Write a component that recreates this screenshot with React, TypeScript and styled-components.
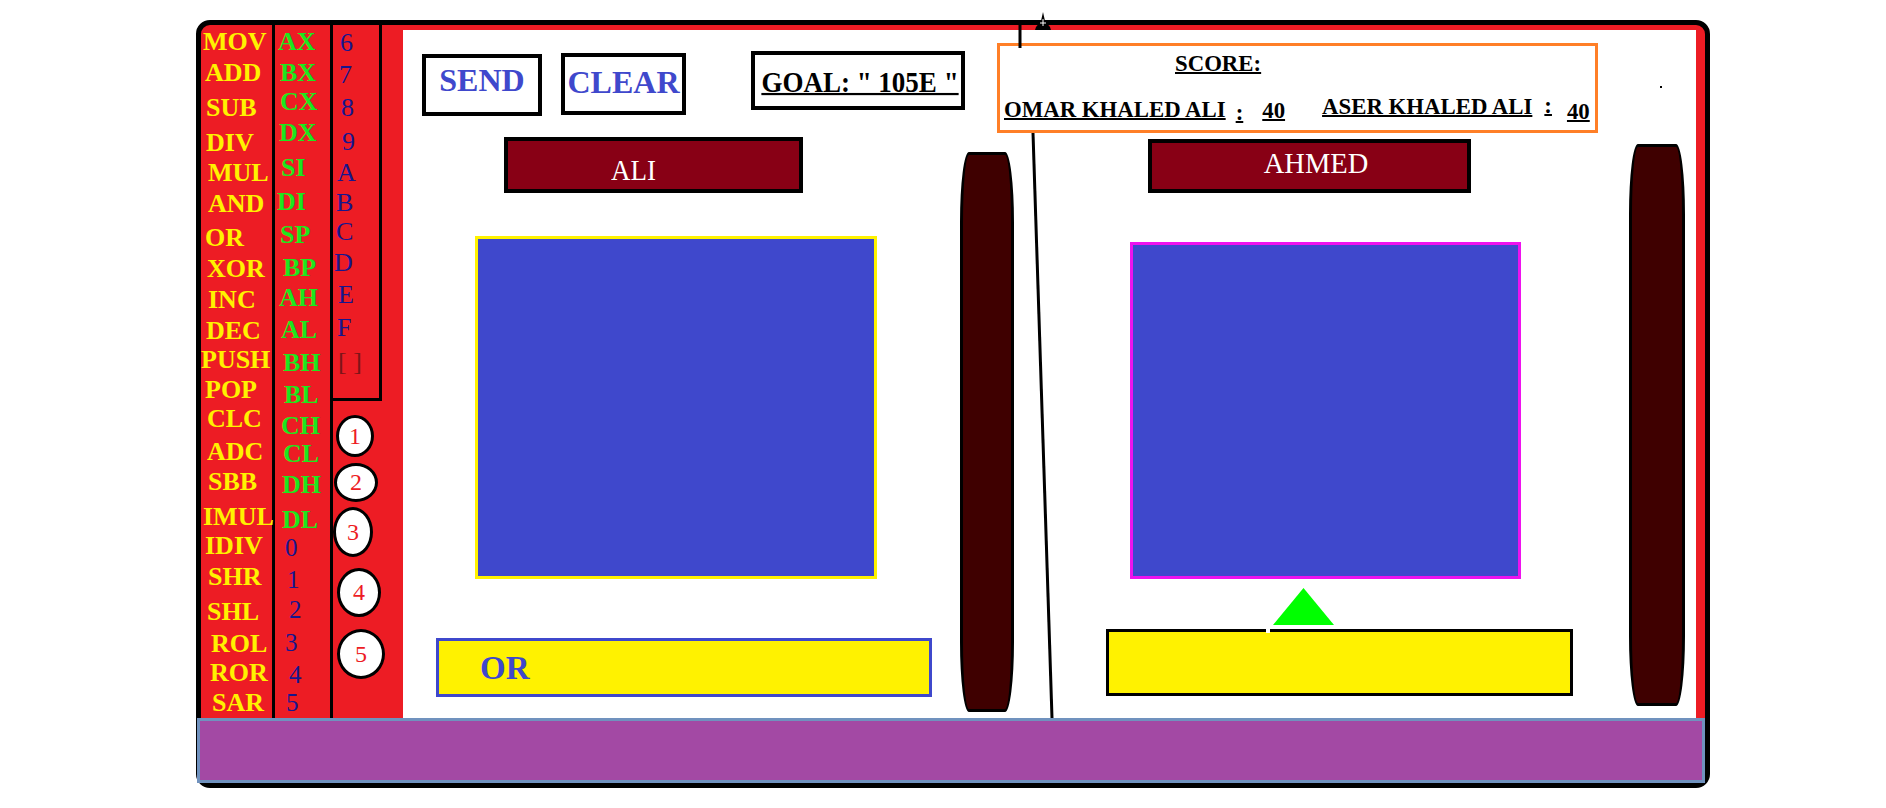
import React from "react";
import styled, { createGlobalStyle } from "styled-components";

const RED = "#ed1c24";
const YELLOW = "#fff200";
const GREEN = "#1ee61e";
const NAVY = "#16168e";
const BLUE = "#3f48cc";
const MAROON = "#880015";
const PILL = "#3f0000";

const GlobalStyle = createGlobalStyle`
  html, body {
    margin: 0;
    padding: 0;
    background: #ffffff;
  }
  body {
    font-family: "Liberation Serif", "Times New Roman", serif;
  }
`;

// [text, centre y on the page, left offset inside the column]
type Item = [string, number, number];

const MNEMONICS: Item[] = [
  ["MOV", 42, 2], ["ADD", 73, 4], ["SUB", 108, 5], ["DIV", 143, 5],
  ["MUL", 173, 7], ["AND", 204, 7], ["OR", 238, 4], ["XOR", 269, 6],
  ["INC", 300, 7], ["DEC", 331, 5], ["PUSH", 360, 0], ["POP", 390, 4],
  ["CLC", 419, 6], ["ADC", 452, 6], ["SBB", 482, 7], ["IMUL", 517, 2],
  ["IDIV", 546, 4], ["SHR", 577, 7], ["SHL", 612, 6], ["ROL", 644, 10],
  ["ROR", 673, 9], ["SAR", 703, 11],
];

const REGISTERS: Item[] = [
  ["AX", 42, 3], ["BX", 73, 5], ["CX", 102, 5], ["DX", 133, 4],
  ["SI", 168, 6], ["DI", 202, 2], ["SP", 235, 5], ["BP", 268, 8],
  ["AH", 298, 4], ["AL", 330, 6], ["BH", 363, 8], ["BL", 395, 9],
  ["CH", 426, 6], ["CL", 454, 8], ["DH", 485, 7], ["DL", 520, 7],
  ["0", 548, 10], ["1", 580, 12], ["2", 610, 14], ["3", 643, 10],
  ["4", 675, 14], ["5", 703, 11],
];

const HEX: Item[] = [
  ["6", 43, 7], ["7", 75, 6], ["8", 108, 8], ["9", 142, 9],
  ["A", 173, 4], ["B", 203, 3], ["C", 232, 3], ["D", 263, 1],
  ["E", 295, 5], ["F", 328, 4], ["[ ]", 362, 5],
];

// label, top, left, width, height
const BUBBLES: [string, number, number, number, number][] = [
  ["1", 415, 3, 38, 42],
  ["2", 463, 1, 44, 39],
  ["3", 507, 0, 40, 50],
  ["4", 568, 4, 44, 49],
  ["5", 629, 4, 48, 50],
];

const COLUMN_TOP = 25;
const LINE = 22;

const gapsFor = (items: Item[]) =>
  items.map((it, i) =>
    i === 0 ? it[1] - LINE / 2 - COLUMN_TOP : it[1] - items[i - 1][1] - LINE
  );

const tones = {
  op: { color: YELLOW, weight: 700, size: 26 },
  reg: { color: GREEN, weight: 700, size: 26 },
  num: { color: NAVY, weight: 400, size: 25 },
  hex: { color: NAVY, weight: 400, size: 26 },
  bracket: { color: "#7d1418", weight: 400, size: 26 },
};
type Tone = keyof typeof tones;

const App = () => {
  const opGaps = gapsFor(MNEMONICS);
  const regGaps = gapsFor(REGISTERS);
  const hexGaps = gapsFor(HEX);

  return (
    <>
      <GlobalStyle />
      <Page>
        <Frame>
          <ContentRow>
            <Sidebar>
              <OpColumn>
                {MNEMONICS.map(([t, , x], i) => (
                  <SideLabel key={t} $tone="op" $gap={opGaps[i]} $x={x}>
                    {t}
                  </SideLabel>
                ))}
              </OpColumn>
              <RegColumn>
                {REGISTERS.map(([t, , x], i) => (
                  <SideLabel
                    key={t}
                    $tone={/\d/.test(t) ? "num" : "reg"}
                    $gap={regGaps[i]}
                    $x={x}
                  >
                    {t}
                  </SideLabel>
                ))}
              </RegColumn>
              <HexColumn>
                <HexBox>
                  {HEX.map(([t, , x], i) => (
                    <SideLabel
                      key={t}
                      $tone={t === "[ ]" ? "bracket" : "hex"}
                      $gap={hexGaps[i]}
                      $x={x}
                    >
                      {t}
                    </SideLabel>
                  ))}
                </HexBox>
                {BUBBLES.map(([t, top, x, w, h], i) => {
                  const prev = i === 0 ? 401 : BUBBLES[i - 1][1] + BUBBLES[i - 1][4];
                  return (
                    <Bubble key={t} $gap={top - prev} $x={x} $w={w} $h={h}>
                      {t}
                    </Bubble>
                  );
                })}
              </HexColumn>
            </Sidebar>

            <Main>
              <TopBar>
                <ActionButton $w={120} $mt={24} $ml={19} $lift={9}>
                  SEND
                </ActionButton>
                <ActionButton $w={125} $mt={23} $ml={19} $lift={3}>
                  CLEAR
                </ActionButton>
                <GoalBox>
                  <Stretched $scale={1.1}>GOAL: " 105E "</Stretched>
                </GoalBox>
                <ScoreBox>
                  <ScoreTitle>SCORE:</ScoreTitle>
                  <ScoreRow>
                    <ScoreText $dx={4} $dy={23}>OMAR KHALED ALI</ScoreText>
                    <ScoreText $dx={10} $dy={26}>:</ScoreText>
                    <ScoreText $dx={19} $dy={24}>40</ScoreText>
                    <ScoreText $dx={37} $dy={20}>ASER KHALED ALI</ScoreText>
                    <ScoreText $dx={12} $dy={19}>:</ScoreText>
                    <ScoreText $dx={15} $dy={25}>40</ScoreText>
                  </ScoreRow>
                </ScoreBox>
              </TopBar>

              <Arena>
                <PlayerSide $ml={33} $w={496}>
                  <NameBar $w={299} $h={56} $mt={4} $ml={68} $size={27} $pad="10px 40px 0 0">
                    <Stretched $scale={1.1}>ALI</Stretched>
                  </NameBar>
                  <Screen $w={402} $h={343} $mt={43} $ml={39} $edge={YELLOW} />
                  <CommandBar $w={496} $h={59} $mt={59} $edge={BLUE}>
                    OR
                  </CommandBar>
                </PlayerSide>
                <Pill $w={54} $h={560} $mt={19} $ml={28} />
                <PlayerSide $ml={92} $w={467}>
                  <NameBar $w={323} $h={54} $mt={6} $ml={42} $size={28.5} $pad="0 0 4px 13px">
                    <Stretched $scale={1}>AHMED</Stretched>
                  </NameBar>
                  <Screen $w={391} $h={337} $mt={49} $ml={24} $edge="#ee12ee" />
                  <Arrow viewBox="0 0 61 37">
                    <polygon points="0,37 30.5,0 61,37" fill="#00ff00" />
                  </Arrow>
                  <CommandBar $w={467} $h={67} $mt={4} $edge="#000000" />
                </PlayerSide>
                <Pill $w={56} $h={562} $mt={11} $ml={56} />
              </Arena>

              <Overlay>
                <line x1={617} y1={-5} x2={617} y2={18} stroke="#000" strokeWidth={3} />
                <line x1={630} y1={103} x2={649} y2={688} stroke="#000" strokeWidth={3} />
                <polygon
                  points="640,-18 642,-9 647,-3 648,0 632,0 633,-3 638,-9"
                  fill="#000"
                />
                <line x1={640} y1={-11} x2={640} y2={-4} stroke="#fff" strokeWidth={1} />
                <line x1={637} y1={-7} x2={643} y2={-7} stroke="#fff" strokeWidth={1} />
                <rect x={1257} y={56} width={2} height={2} fill="#000" />
                <rect x={863} y={599} width={4} height={4} fill="#fff" />
              </Overlay>
            </Main>
          </ContentRow>
          <StatusBar />
        </Frame>
      </Page>
    </>
  );
};

const Page = styled.div`
  width: 1886px;
  height: 808px;
  box-sizing: border-box;
  padding: 20px 0 0 196px;
  overflow: hidden;
`;

const Frame = styled.div`
  width: 1514px;
  height: 768px;
  box-sizing: border-box;
  border: 5px solid #000;
  border-radius: 14px;
  background: ${RED};
  display: grid;
  grid-template-rows: 693px 65px;
`;

const ContentRow = styled.div`
  display: grid;
  grid-template-columns: 202px 1293px;
  padding-right: 9px;
`;

const Sidebar = styled.aside`
  display: grid;
  grid-template-columns: 74px 58px 70px;
  height: 693px;
`;

const OpColumn = styled.div`
  display: flex;
  flex-direction: column;
  border-right: 3px solid #000;
`;

const RegColumn = styled.div`
  display: flex;
  flex-direction: column;
  border-right: 3px solid #000;
`;

const HexColumn = styled.div`
  display: flex;
  flex-direction: column;
`;

const HexBox = styled.div`
  width: 49px;
  height: 376px;
  box-sizing: border-box;
  border-right: 3px solid #000;
  border-bottom: 3px solid #000;
  display: flex;
  flex-direction: column;
`;

const SideLabel = styled.div<{ $tone: Tone; $gap: number; $x: number }>`
  margin-top: ${(p) => p.$gap}px;
  padding-left: ${(p) => p.$x}px;
  height: ${LINE}px;
  line-height: ${LINE}px;
  font-size: ${(p) => tones[p.$tone].size}px;
  font-weight: ${(p) => tones[p.$tone].weight};
  color: ${(p) => tones[p.$tone].color};
  white-space: nowrap;
  flex-shrink: 0;
`;

const Bubble = styled.div<{ $gap: number; $x: number; $w: number; $h: number }>`
  margin-top: ${(p) => p.$gap}px;
  margin-left: ${(p) => p.$x}px;
  width: ${(p) => p.$w}px;
  height: ${(p) => p.$h}px;
  flex-shrink: 0;
  box-sizing: border-box;
  border: 3px solid #000;
  border-radius: 50%;
  background: #fff;
  color: ${RED};
  font-size: 24px;
  display: flex;
  align-items: center;
  justify-content: center;
`;

const Main = styled.main`
  position: relative;
  margin-top: 5px;
  height: 688px;
  background: #fff;
  display: flex;
  flex-direction: column;
`;

const TopBar = styled.div`
  display: flex;
  align-items: flex-start;
  height: 103px;
  flex-shrink: 0;
`;

const Stretched = styled.span<{ $scale: number }>`
  display: inline-block;
  transform: scaleY(${(p) => p.$scale});
  white-space: nowrap;
`;

const ActionButton = styled.div<{ $w: number; $mt: number; $ml: number; $lift: number }>`
  width: ${(p) => p.$w}px;
  height: 62px;
  margin: ${(p) => p.$mt}px 0 0 ${(p) => p.$ml}px;
  flex-shrink: 0;
  box-sizing: border-box;
  border: 4px solid #000;
  padding-bottom: ${(p) => p.$lift}px;
  display: flex;
  align-items: center;
  justify-content: center;
  color: ${BLUE};
  font-size: 32px;
  font-weight: 700;
`;

const GoalBox = styled.div`
  width: 214px;
  height: 59px;
  margin: 21px 0 0 65px;
  flex-shrink: 0;
  box-sizing: border-box;
  border: 4px solid #000;
  display: flex;
  align-items: center;
  justify-content: center;
  padding: 3px 0 0 4px;
  font-size: 27px;
  font-weight: 700;
  color: #000;
  text-decoration: underline;
  text-decoration-thickness: 2px;
`;

const ScoreBox = styled.div`
  width: 601px;
  height: 90px;
  margin: 13px 0 0 32px;
  flex-shrink: 0;
  box-sizing: border-box;
  border: 3px solid #ff7f27;
  display: flex;
  flex-direction: column;
`;

const ScoreTitle = styled.div`
  margin: 7px 0 0 175px;
  height: 22.8px;
  line-height: 22.8px;
  font-size: 22.8px;
  font-weight: 700;
  text-decoration: underline;
  text-decoration-thickness: 2px;
  align-self: flex-start;
`;

const ScoreRow = styled.div`
  display: flex;
  align-items: flex-start;
  height: 0;
`;

const ScoreText = styled.span<{ $dx: number; $dy: number }>`
  display: inline-block;
  flex-shrink: 0;
  margin: ${(p) => p.$dy}px 0 0 ${(p) => p.$dx}px;
  height: 22.8px;
  line-height: 22.8px;
  font-size: 22.8px;
  font-weight: 700;
  white-space: nowrap;
  text-decoration: underline;
  text-decoration-thickness: 2px;
`;

const Arena = styled.div`
  display: flex;
  align-items: flex-start;
`;

const PlayerSide = styled.section<{ $ml: number; $w: number }>`
  margin-left: ${(p) => p.$ml}px;
  width: ${(p) => p.$w}px;
  flex-shrink: 0;
  display: flex;
  flex-direction: column;
  align-items: flex-start;
`;

const NameBar = styled.div<{
  $w: number;
  $h: number;
  $mt: number;
  $ml: number;
  $size: number;
  $pad: string;
}>`
  width: ${(p) => p.$w}px;
  height: ${(p) => p.$h}px;
  margin: ${(p) => p.$mt}px 0 0 ${(p) => p.$ml}px;
  flex-shrink: 0;
  box-sizing: border-box;
  border: 4px solid #000;
  padding: ${(p) => p.$pad};
  background: ${MAROON};
  color: #fff;
  font-size: ${(p) => p.$size}px;
  display: flex;
  align-items: center;
  justify-content: center;
`;

const Screen = styled.div<{ $w: number; $h: number; $mt: number; $ml: number; $edge: string }>`
  width: ${(p) => p.$w}px;
  height: ${(p) => p.$h}px;
  margin: ${(p) => p.$mt}px 0 0 ${(p) => p.$ml}px;
  flex-shrink: 0;
  box-sizing: border-box;
  border: 3px solid ${(p) => p.$edge};
  background: ${BLUE};
`;

const CommandBar = styled.div<{ $w: number; $h: number; $mt: number; $edge: string }>`
  width: ${(p) => p.$w}px;
  height: ${(p) => p.$h}px;
  margin-top: ${(p) => p.$mt}px;
  flex-shrink: 0;
  box-sizing: border-box;
  border: 3px solid ${(p) => p.$edge};
  background: ${YELLOW};
  display: flex;
  align-items: center;
  padding: 2px 0 0 41px;
  color: ${BLUE};
  font-size: 33px;
  font-weight: 700;
`;

const Arrow = styled.svg`
  width: 61px;
  height: 37px;
  margin: 9px 0 0 167px;
  display: block;
  flex-shrink: 0;
`;

const Pill = styled.div<{ $w: number; $h: number; $mt: number; $ml: number }>`
  width: ${(p) => p.$w}px;
  height: ${(p) => p.$h}px;
  margin: ${(p) => p.$mt}px 0 0 ${(p) => p.$ml}px;
  flex-shrink: 0;
  box-sizing: border-box;
  border: 3px solid #000;
  border-radius: 9px / 70px;
  background: ${PILL};
`;

const Overlay = styled.svg`
  position: absolute;
  left: 0;
  top: 0;
  width: 100%;
  height: 100%;
  overflow: visible;
  pointer-events: none;
`;

const StatusBar = styled.footer`
  margin-left: -4px;
  box-sizing: border-box;
  border: 3px solid #7092be;
  background: #a349a4;
`;

export default App;
